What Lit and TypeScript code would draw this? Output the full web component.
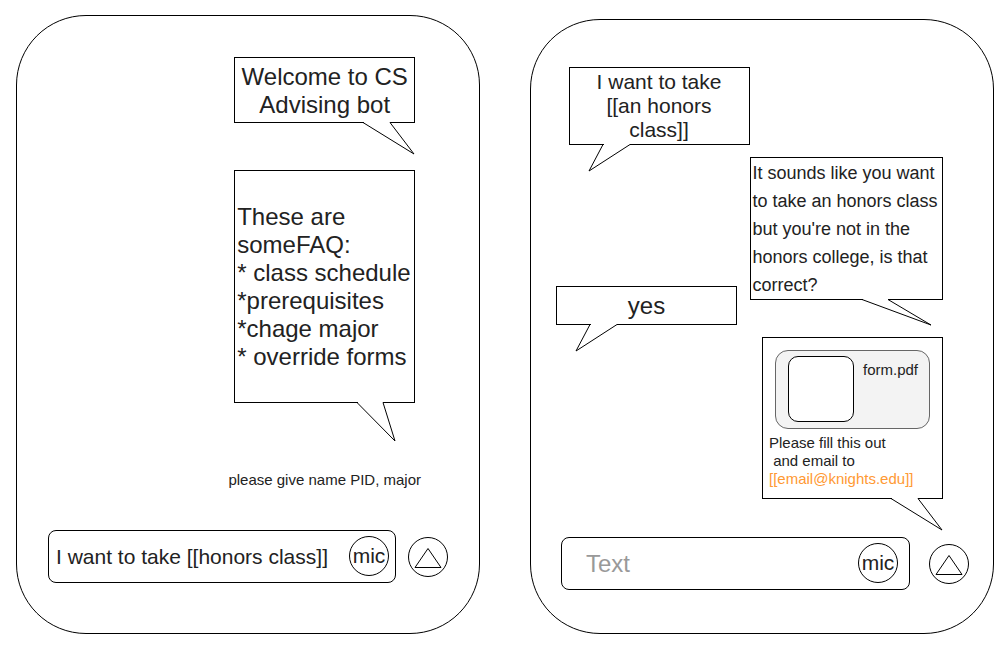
import { LitElement, html, css, svg } from "lit";
import { customElement, property } from "lit/decorators.js";

/** A speech bubble: a bordered box whose bottom edge opens into a pointed tail. */
@customElement("speech-bubble")
class SpeechBubble extends LitElement {
  /** Tail geometry measured from the box's left edge: open start, open end, tip x, tip depth. */
  @property({ attribute: false }) tail: number[] = [129, 156, 180, 32];

  static styles = css`
    :host {
      display: block;
      position: relative;
      box-sizing: border-box;
      width: 181px;
      border: 1px solid #000;
      background: #fff;
    }
    .tail {
      position: absolute;
      left: -1px;
      top: 100%;
      overflow: visible;
      pointer-events: none;
    }
    .edge {
      fill: none;
      stroke: #000;
      stroke-width: 1;
      stroke-linejoin: round;
    }
    .opening {
      stroke: #fff;
      stroke-width: 1;
    }
  `;

  render() {
    const [a, b, tip, depth] = this.tail;
    return html`
      <slot></slot>
      <svg class="tail" width="1" height="1" aria-hidden="true">
        ${svg`
          <line class="opening" x1=${a + 1} y1="0.5" x2=${b} y2="0.5"></line>
          <path class="edge" d="M${a} 0.5L${tip} ${depth}L${b} 0.5"></path>
        `}
      </svg>
    `;
  }
}

/** Message entry with a mic button inside the field and a send button beside it. */
@customElement("message-composer")
class MessageComposer extends LitElement {
  @property() value = "";
  @property() placeholder = "";

  static styles = css`
    :host {
      display: flex;
      align-items: center;
      gap: var(--send-gap, 12px);
    }
    .field {
      flex: 1;
      min-width: 0;
      display: flex;
      align-items: center;
      box-sizing: border-box;
      border: 1px solid #000;
      border-radius: 8px;
      padding: 5px var(--field-end, 6px) 6px var(--field-start, 7px);
    }
    .entry {
      flex: 1;
      min-width: 0;
      height: 40px;
      padding: 2px 0 0;
      box-sizing: border-box;
      border: 0;
      outline: 0;
      background: none;
      color: #222;
      font: var(--field-size, 21px) "Liberation Sans", Arial, sans-serif;
    }
    .entry::placeholder {
      color: #999;
      opacity: 1;
    }
    .round {
      flex: none;
      display: flex;
      align-items: center;
      justify-content: center;
      box-sizing: border-box;
      width: 40px;
      height: 40px;
      padding: 0;
      border: 1px solid #000;
      border-radius: 50%;
      background: #fff;
      color: #222;
      font: 21px "Liberation Sans", Arial, sans-serif;
    }
    .triangle {
      fill: none;
      stroke: #000;
      stroke-width: 1;
    }
  `;

  render() {
    return html`
      <div class="field">
        <input
          class="entry"
          type="text"
          aria-label="Message"
          .value=${this.value}
          placeholder=${this.placeholder}
        />
        <button class="round" type="button">mic</button>
      </div>
      <button class="round" type="button" aria-label="Send">
        <svg width="38" height="38" viewBox="0 0 38 38" aria-hidden="true">
          <path class="triangle" d="M19 10.5L32 29.5H6Z"></path>
        </svg>
      </button>
    `;
  }
}

@customElement("app-root")
class AppRoot extends LitElement {
  static styles = css`
    :host {
      display: grid;
      grid-template-columns: minmax(0, 1fr) minmax(0, 1fr);
      gap: 50px;
      padding: 15px 12px 13px 16px;
      background: #fff;
      color: #222;
      font: 15px/18px "Liberation Sans", Arial, sans-serif;
    }
    .phone {
      display: flex;
      flex-direction: column;
      box-sizing: border-box;
      border: 1px solid #000;
      border-radius: 70px;
    }
    .welcome-phone {
      padding: 41px 31px 50px;
    }
    .request-phone {
      margin-top: 4px;
      padding: 47px 24px 43px 25px;
    }
    .bot-side {
      display: flex;
      flex-direction: column;
      align-items: center;
      align-self: flex-end;
      margin-right: 27px;
    }
    .large {
      font-size: 24px;
      line-height: 28px;
    }
    .medium {
      font-size: 21px;
      line-height: 24px;
    }
    .small {
      font-size: 18px;
      line-height: 28px;
    }
    .centered {
      text-align: center;
    }
    .welcome {
      padding: 5px 0 3px;
    }
    .faq {
      margin-top: 47px;
      padding: 32px 0 31px 2px;
      box-sizing: border-box;
      white-space: nowrap;
    }
    .hint {
      margin: 68px 0 41px;
    }
    .thread {
      display: grid;
      grid-template-columns: minmax(0, 1fr) minmax(0, 1fr);
      padding-right: 26px;
      margin-bottom: 38px;
    }
    .user,
    .bot {
      display: flex;
      flex-direction: column;
    }
    .user {
      gap: 141px;
    }
    .bot {
      gap: 37px;
      padding-top: 90px;
    }
    .end {
      align-self: flex-end;
    }
    .request {
      padding: 2px 0;
    }
    .answer {
      padding: 5px 0 4px;
    }
    .question {
      width: 193px;
      padding: 1px 0 0 2px;
      white-space: nowrap;
    }
    .reply {
      padding: 12px 12px 10px;
    }
    .attachment {
      display: flex;
      gap: 9px;
      padding: 5px 8px 6px 12px;
      border: 1px solid #666;
      border-radius: 13px;
      background: #f3f3f3;
      color: #222;
      text-decoration: none;
    }
    .thumb {
      flex: none;
      box-sizing: border-box;
      width: 66px;
      height: 66px;
      border: 1px solid #000;
      border-radius: 10px;
      background: #fff;
    }
    .filename {
      padding-top: 5px;
    }
    .note {
      margin: 5px -12px 0 -6px;
      white-space: pre;
    }
    .mail {
      color: #ff9933;
      text-decoration: none;
    }
    .request-composer {
      --send-gap: 19px;
      --field-start: 24px;
      --field-end: 11px;
      --field-size: 24px;
      margin-left: 5px;
    }
  `;

  render() {
    const leftTail = [34, 61, 20, 27];
    return html`
      <section class="phone welcome-phone" aria-label="Welcome">
        <div class="bot-side">
          <speech-bubble class="large centered welcome">
            Welcome to CS<br />Advising bot
          </speech-bubble>
          <speech-bubble class="large faq" .tail=${[123, 149, 161, 39]}>
            These are<br />someFAQ:<br />* class schedule<br />*prerequisites<br />*chage
            major<br />* override forms
          </speech-bubble>
          <p class="hint">please give name PID, major</p>
        </div>
        <message-composer value="I want to take [[honors class]]"></message-composer>
      </section>

      <section class="phone request-phone" aria-label="Request">
        <div class="thread">
          <div class="user">
            <speech-bubble class="medium centered request end" .tail=${leftTail}>
              I want to take<br />[[an honors<br />class]]
            </speech-bubble>
            <speech-bubble class="large centered answer" .tail=${leftTail}>yes</speech-bubble>
          </div>
          <div class="bot">
            <speech-bubble class="small question" .tail=${[112, 138, 181, 26]}>
              It sounds like you want<br />to take an honors class<br />but you're not in
              the<br />honors college, is that<br />correct?
            </speech-bubble>
            <speech-bubble class="reply end">
              <a class="attachment" href="#form">
                <span class="thumb"></span>
                <span class="filename">form.pdf</span>
              </a>
              <p class="note">Please fill this out
 and email to
<a class="mail" href="mailto:email@knights.edu">[[email@knights.edu]]</a></p>
            </speech-bubble>
          </div>
        </div>
        <message-composer class="request-composer" placeholder="Text"></message-composer>
      </section>
    `;
  }
}
